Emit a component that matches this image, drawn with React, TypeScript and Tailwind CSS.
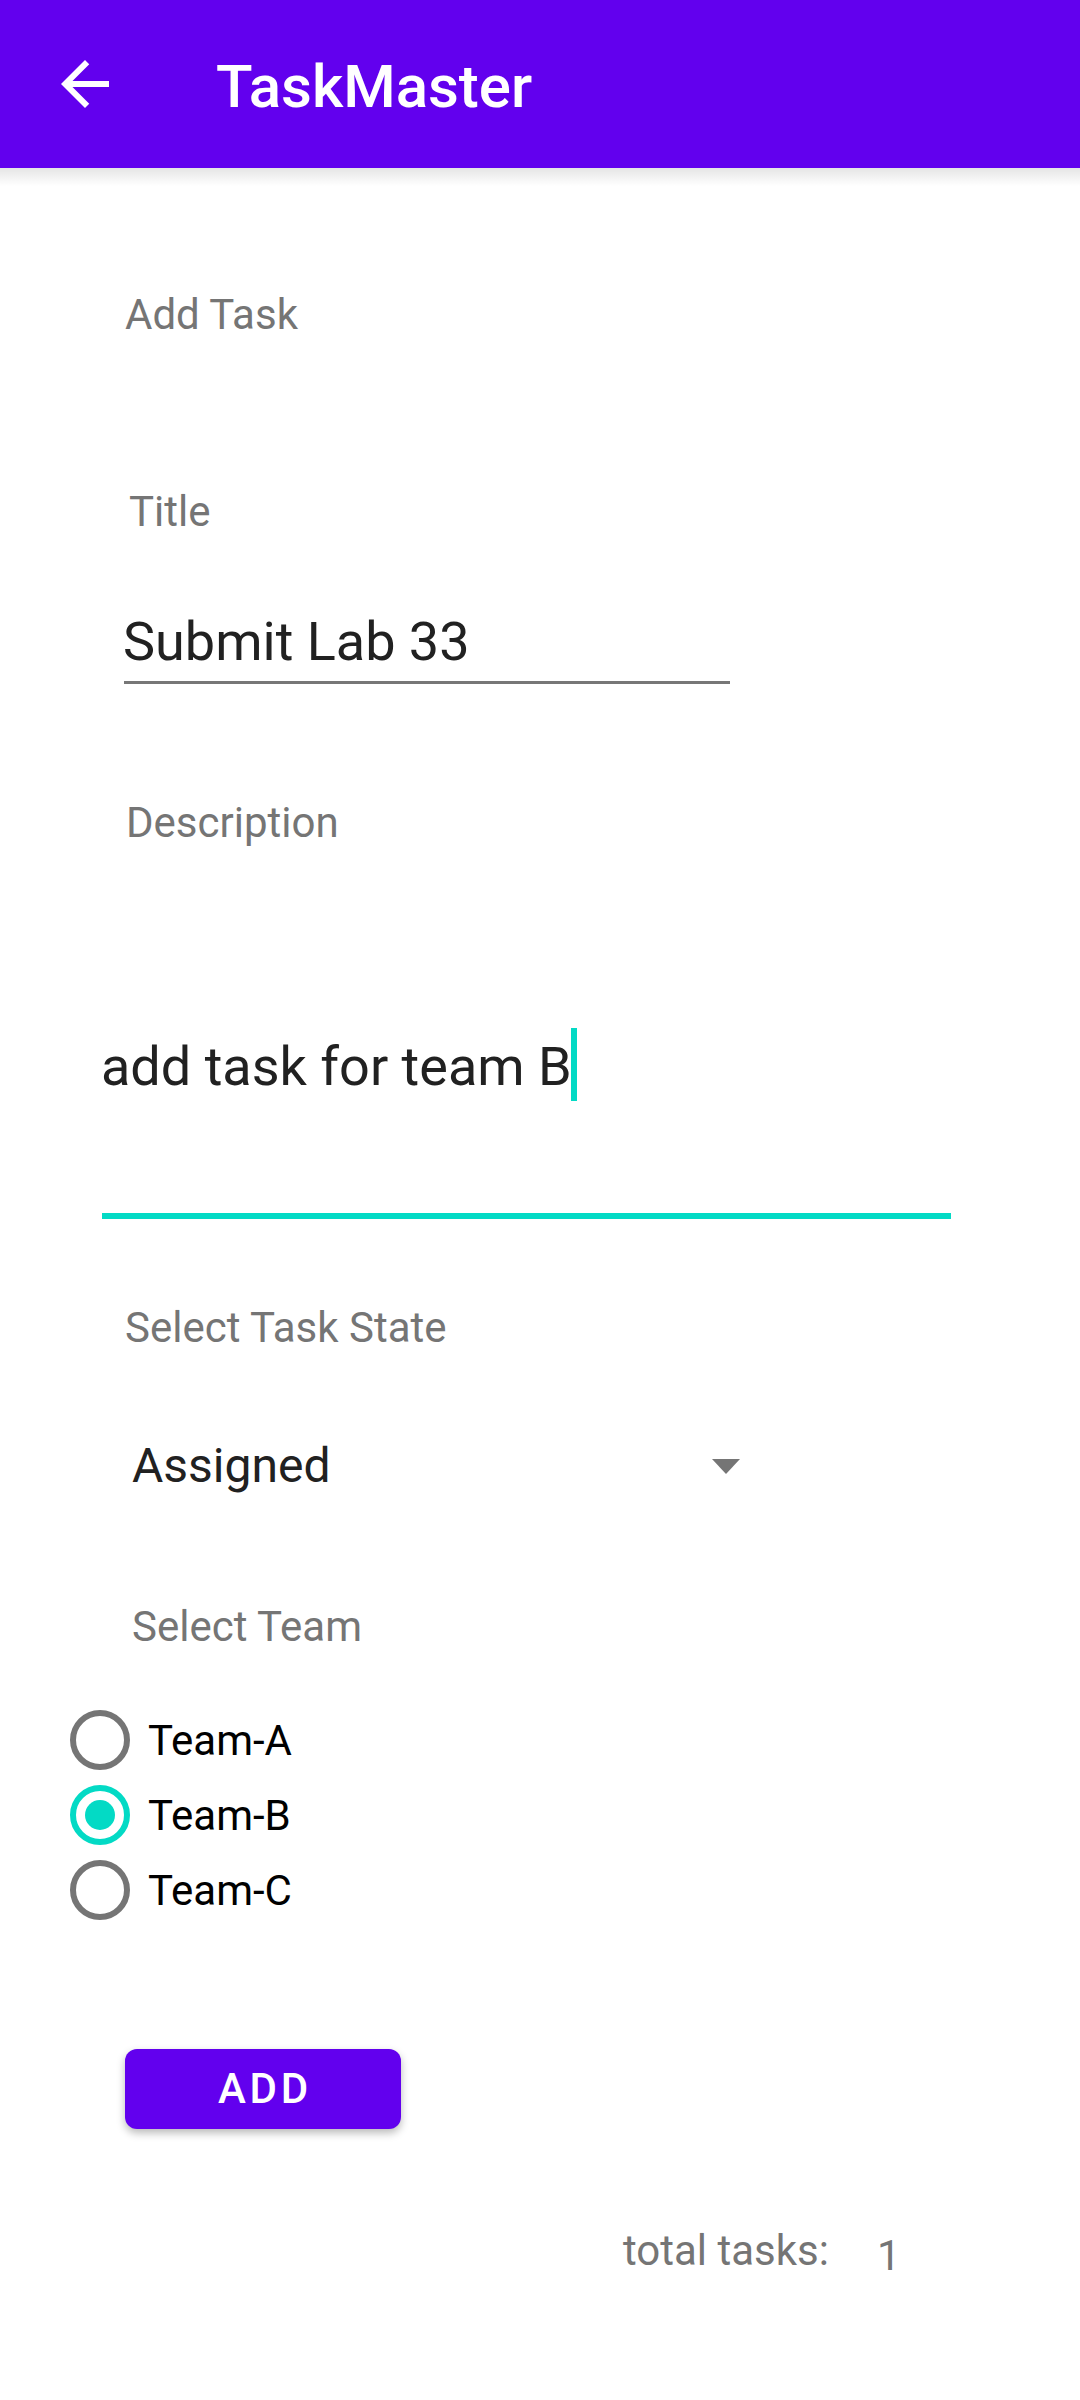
export default function App() {
  const teams = [
    { label: "Team-A", checked: false },
    { label: "Team-B", checked: true },
    { label: "Team-C", checked: false },
  ];
  return (
    <div className="w-[1080px] min-h-[2400px] bg-white [font-family:Roboto,sans-serif] flex flex-col">
      <header className="relative z-10 h-[168px] shrink-0 bg-[#6200EE] flex items-center">
        <svg className="ml-[49px] w-[72px] h-[72px] shrink-0" viewBox="0 0 24 24" fill="#ffffff">
          <path d="M20 11H7.83l5.59-5.59L12 4l-8 8 8 8 1.41-1.41L7.83 13H20v-2z" />
        </svg>
        <h1 className="ml-[95px] mt-[5px] text-[60px] leading-[72px] font-medium text-white">TaskMaster</h1>
        <div className="absolute left-0 right-0 top-full h-[18px] bg-linear-to-b from-[rgba(0,0,0,0.10)] to-transparent" />
      </header>

      <main className="flex flex-col items-start">
        <p className="mt-[122px] ml-[125px] text-[42px] leading-[50px] text-[#757575]">Add Task</p>

        <p className="mt-[147px] ml-[129px] text-[42px] leading-[50px] text-[#757575]">Title</p>
        <p className="mt-[73px] ml-[123px] text-[54px] leading-[64px] text-[#212121]">Submit Lab 33</p>
        <div className="mt-[7px] ml-[124px] w-[606px] h-[3px] bg-[#777777]" />

        <p className="mt-[114px] ml-[126px] text-[42px] leading-[50px] text-[#757575]">Description</p>
        <div className="mt-[180px] ml-[101px] flex items-start">
          <span className="mt-[7px] text-[54px] leading-[64px] text-[#212121]">add task for team B</span>
          <span className="-ml-[1px] w-[6px] h-[73px] bg-[#03DAC5]" />
        </div>
        <div className="mt-[112px] ml-[102px] w-[849px] h-[6px] bg-[#03DAC5]" />

        <p className="mt-[84px] ml-[125px] text-[42px] leading-[50px] text-[#757575]">Select Task State</p>
        <div className="mt-[85px] ml-[132px] w-[608px] flex items-center justify-between">
          <span className="text-[48px] leading-[56px] text-[#212121]">Assigned</span>
          <svg className="w-[28px] h-[15px]" viewBox="0 0 28 15">
            <polygon points="0,0 28,0 14,15" fill="#757575" />
          </svg>
        </div>

        <p className="mt-[108px] ml-[132px] text-[42px] leading-[50px] text-[#757575]">Select Team</p>
        <div className="mt-[50px] flex flex-col">
          {teams.map((t) => (
            <div key={t.label} className="h-[75px] flex items-center">
              <span
                className={
                  t.checked
                    ? "ml-[70px] w-[60px] h-[60px] rounded-full border-[6px] border-[#03DAC5] flex items-center justify-center"
                    : "ml-[70px] w-[60px] h-[60px] rounded-full border-[6px] border-[#757575] flex items-center justify-center"
                }
              >
                {t.checked && <span className="w-[30px] h-[30px] rounded-full bg-[#03DAC5]" />}
              </span>
              <span className="ml-[18px] mt-[3px] text-[42px] leading-[50px] text-black">{t.label}</span>
            </div>
          ))}
        </div>

        <button className="mt-[122px] ml-[125px] w-[276px] h-[80px] rounded-[12px] bg-[#6200EE] shadow-[0_4px_8px_rgba(0,0,0,0.28)] flex items-center justify-center pl-[4px] text-[42px] leading-[50px] font-medium tracking-[0.09em] text-white">
          ADD
        </button>

        <div className="mt-[97px] ml-[623px] flex items-baseline">
          <span className="text-[42px] leading-[50px] text-[#757575]">total tasks:</span>
          <span className="relative top-[5px] ml-[48px] text-[42px] leading-[50px] text-[#757575]">1</span>
        </div>
      </main>
    </div>
  );
}
